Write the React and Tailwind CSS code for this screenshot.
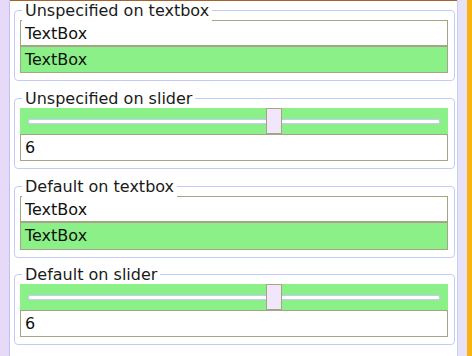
import React from "react";

const font = { fontFamily: '"DejaVu Sans", "Noto Sans", sans-serif' };

function Legend({ children }) {
  return (
    <span className="absolute left-[7px] top-[-10px] bg-white px-[3px] text-[16px] leading-[20px] text-[#1a1a1a] whitespace-nowrap">
      {children}
    </span>
  );
}

function TextBox({ green, value, h }) {
  return (
    <div
      className={`${h} border border-[#a4a486] pl-[4px] pt-[2px] text-[16px] leading-[22px] text-[#111] ${green ? "bg-[#8cf088]" : "bg-white"}`}
    >
      {value}
    </div>
  );
}

function Slider() {
  return (
    <div className="relative h-[26px] bg-[#8cf088] flex items-center px-[8px]">
      <div className="h-[5px] w-full bg-white border border-[#c8c8f4] rounded-[2px]" />
      <div className="absolute left-[246px] top-0 h-[26px] w-[16px] border border-[#a4a486] bg-[#f2e6fa]" />
    </div>
  );
}

function Group({ title, children, mt }) {
  return (
    <div className={`relative ${mt} border border-[#c4ccf6] rounded-[4px] pt-[9px] pl-[5px] pr-[6px] pb-[7px]`}>
      <Legend>{title}</Legend>
      {children}
    </div>
  );
}

export default function App() {
  return (
    <div className="w-[472px] h-[356px] bg-white flex overflow-hidden" style={font}>
      <div className="w-[10px] h-full bg-[#e6daf8] border-r border-[#c4bef2]" />
      <div className="flex-1 flex flex-col">
        <div className="h-[1px] bg-[#a8602c]" />
        <div className="flex-1 pl-[4px] pr-[2px]">
          <Group title="Unspecified on textbox" mt="mt-[9px]">
            <TextBox value="TextBox" h="h-[26px]" />
            <TextBox value="TextBox" green h="h-[27px]" />
          </Group>
          <Group title="Unspecified on slider" mt="mt-[17px]">
            <Slider />
            <TextBox value="6" h="h-[27px]" />
          </Group>
          <Group title="Default on textbox" mt="mt-[17px]">
            <TextBox value="TextBox" h="h-[26px]" />
            <TextBox value="TextBox" green h="h-[28px]" />
          </Group>
          <Group title="Default on slider" mt="mt-[16px]">
            <Slider />
            <TextBox value="6" h="h-[27px]" />
          </Group>
        </div>
      </div>
      <div className="w-[10px] h-full bg-[#e8e2f8] border-l border-[#c8d0f4]" />
      <div className="w-[5px] h-full bg-[#f8b410]" />
    </div>
  );
}
